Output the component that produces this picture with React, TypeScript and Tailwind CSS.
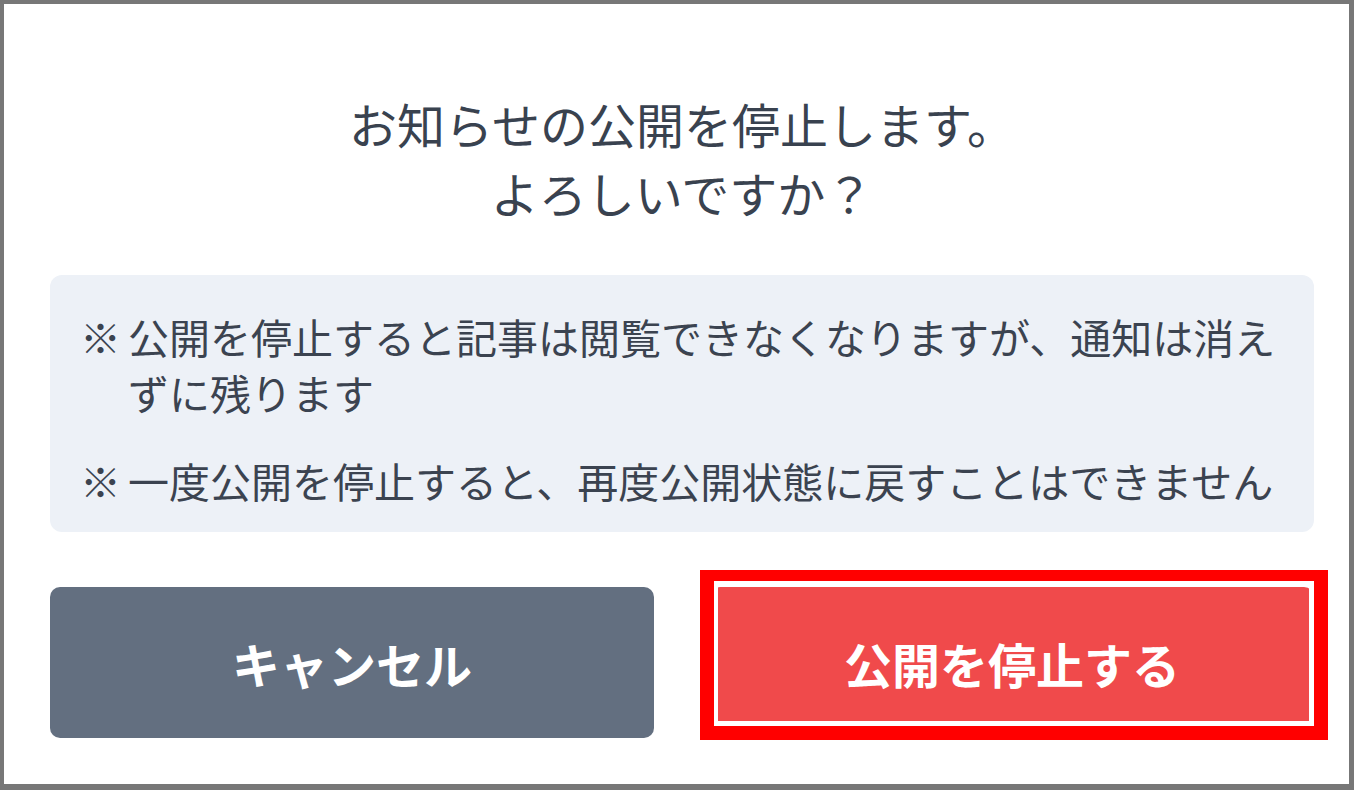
import React from 'react';

const font = { fontFamily: '"Noto Sans CJK JP", "Noto Sans", sans-serif' };

export default function App() {
  const notes = [
    '公開を停止すると記事は閲覧できなくなりますが、通知は消えずに残ります',
    '一度公開を停止すると、再度公開状態に戻すことはできません',
  ];

  return (
    <div
      style={font}
      className="w-[1354px] h-[790px] bg-white border-[#777777] border-t-4 border-l-4 border-r-[5px] border-b-[6px] pl-[46px] pr-[35px] pt-[85px]"
    >
      <div className="w-[1264px]">
        <h2 className="text-center text-[48px] leading-[69px] text-[#39424f] font-normal">
          お知らせの公開を停止します。
          <br />
          よろしいですか？
        </h2>

        <div className="mt-[48px] bg-[#edf1f7] rounded-[12px] pl-[30px] pr-[30px] pt-[33px] pb-[24px] flex flex-col gap-[32px]">
          {notes.map((note) => (
            <div key={note} className="flex text-[41px] leading-[56px] text-[#3b4350]">
              <span className="w-[48px] shrink-0">※</span>
              <span className="w-[1156px]">{note}</span>
            </div>
          ))}
        </div>

        <div className="mt-[55px] grid grid-cols-2 gap-[56px]">
          <button className="h-[151px] rounded-[10px] bg-[#636f80] text-white text-[48px] font-bold">
            キャンセル
          </button>
          <div className="relative">
            <button className="w-full h-[151px] rounded-[10px] bg-[#f04a4b] text-white text-[48px] font-bold">
              公開を停止する
            </button>
            <div className="absolute left-[-10px] top-[-17px] w-[628px] h-[170px] border-[#ff0000] border-t-[11px] border-l-[14px] border-r-[14px] border-b-[14px] pointer-events-none">
              <div className="w-full h-full border-white border-t-[5px] border-l-[4px] border-r-[5px] border-b-[5px]" />
            </div>
          </div>
        </div>
      </div>
    </div>
  );
}
